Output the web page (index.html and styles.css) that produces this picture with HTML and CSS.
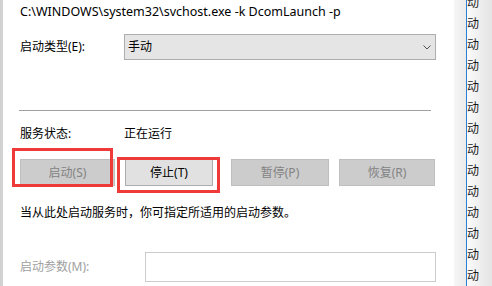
FILE: index.html
```html
<!DOCTYPE html>
<html lang="zh-CN">
<head>
<meta charset="utf-8">
<title>服务属性</title>
<link rel="stylesheet" href="styles.css">
</head>
<body>
<div class="screen">
  <div class="dialog">
    <div class="path">C:\WINDOWS\system32\svchost.exe -k DcomLaunch -p</div>
    <div class="row type-row">
      <span class="label label-wide">启动类型(E):</span>
      <div class="select">
        <span>手动</span>
        <svg class="chevron" width="8" height="5" viewBox="0 0 8 5"><path d="M0.5 0.5 L4 4 L7.5 0.5" fill="none" stroke="#505050" stroke-width="1"/></svg>
      </div>
    </div>
    <div class="sep"></div>
    <div class="row status-row">
      <span class="label label-wide">服务状态:</span>
      <span>正在运行</span>
    </div>
    <div class="buttons">
      <div class="slot">
        <div class="btn btn-disabled">启动(S)</div>
        <span class="mark mark-start"></span>
      </div>
      <div class="slot">
        <div class="btn btn-stop">停止(T)</div>
        <span class="mark mark-stop"></span>
      </div>
      <div class="slot">
        <div class="btn btn-disabled">暂停(P)</div>
      </div>
      <div class="slot">
        <div class="btn btn-disabled">恢复(R)</div>
      </div>
    </div>
    <div class="desc">当从此处启动服务时，你可指定所适用的启动参数。</div>
    <div class="row params-row">
      <span class="label label-params">启动参数(M):</span>
      <div class="input"></div>
    </div>
  </div>
  <div class="side">
    <div class="side-gap"></div>
    <div class="side-line"></div>
    <div class="side-col">
      <div class="side-list">
        <span>动</span><span>动</span><span>动</span><span>动</span><span>动</span><span>动</span><span>动</span><span>动</span><span>动</span><span>动</span><span>动</span><span>动</span><span>动</span><span>动</span><span>动</span>
      </div>
    </div>
  </div>
</div>
</body>
</html>
```

FILE: styles.css
```css
html, body {
  margin: 0;
  padding: 0;
  background: #ffffff;
}

body {
  font-family: "Noto Sans", "Noto Sans CJK SC", sans-serif;
  font-size: 12px;
  color: #000000;
}

.screen {
  display: flex;
  width: 492px;
  height: 286px;
  overflow: hidden;
}

.dialog {
  width: 454px;
  flex: none;
  border-left: 3px solid #d2d2d2;
  padding-left: 17px;
  padding-right: 18px;
  box-sizing: border-box;
  display: flex;
  flex-direction: column;
  background: #ffffff;
}

.path {
  margin-top: 4px;
  line-height: 16px;
  font-size: 12.5px;
  white-space: nowrap;
}

.row {
  display: flex;
  align-items: center;
  line-height: 16px;
}

.label {
  flex: none;
}

.label-wide {
  width: 104px;
}

.label-params {
  width: 125px;
  color: #a0a0a0;
}

.type-row {
  margin-top: 14px;
}

.select {
  flex: 1;
  height: 26px;
  box-sizing: border-box;
  background: #e5e5e5;
  border: 1px solid #adadad;
  display: flex;
  align-items: center;
  justify-content: space-between;
  padding-left: 3px;
  padding-right: 4px;
}

.chevron {
  display: block;
}

.sep {
  margin-top: 50px;
  margin-left: -1px;
  margin-right: 5px;
  height: 1px;
  background: #a0a0a0;
}

.status-row {
  margin-top: 15px;
}

.buttons {
  margin-top: 17px;
  display: grid;
  grid-template-columns: 95px 96px 98px 96px;
  column-gap: 10px;
}

.slot {
  position: relative;
  height: 27px;
}

.btn {
  height: 27px;
  box-sizing: border-box;
  display: flex;
  align-items: center;
  justify-content: center;
  line-height: 16px;
}

.btn-disabled {
  background: #cccccc;
  border: 1px solid #bfbfbf;
  color: #838383;
}

.btn-stop {
  width: 88px;
  background: #e1e1e1;
  border: 1px solid #adadad;
  color: #000000;
}

.mark {
  position: absolute;
  border: 3px solid #ef3a3a;
  box-sizing: border-box;
}

.mark-start {
  left: -8px;
  top: -11px;
  width: 101px;
  height: 39px;
}

.mark-stop {
  left: -8px;
  top: -2px;
  width: 103px;
  height: 36px;
}

.desc {
  margin-top: 19px;
  line-height: 16px;
  white-space: nowrap;
}

.params-row {
  margin-top: 31px;
}

.input {
  flex: 1;
  height: 30px;
  box-sizing: border-box;
  border: 1px solid #cccccc;
  background: #ffffff;
}

.side {
  flex: 1;
  display: flex;
}

.side-gap {
  width: 12px;
  background: linear-gradient(to right, #f6f6f6, #ebebeb);
}

.side-line {
  width: 1px;
  background: #2a7fd4;
}

.side-col {
  flex: 1;
  overflow: hidden;
  background: linear-gradient(to right, #fafafa, #e4e4e4);
}

.side-list {
  margin-top: -8px;
  display: flex;
  flex-direction: column;
  font-size: 12px;
  line-height: 21px;
  color: #1a1a1a;
}
```
